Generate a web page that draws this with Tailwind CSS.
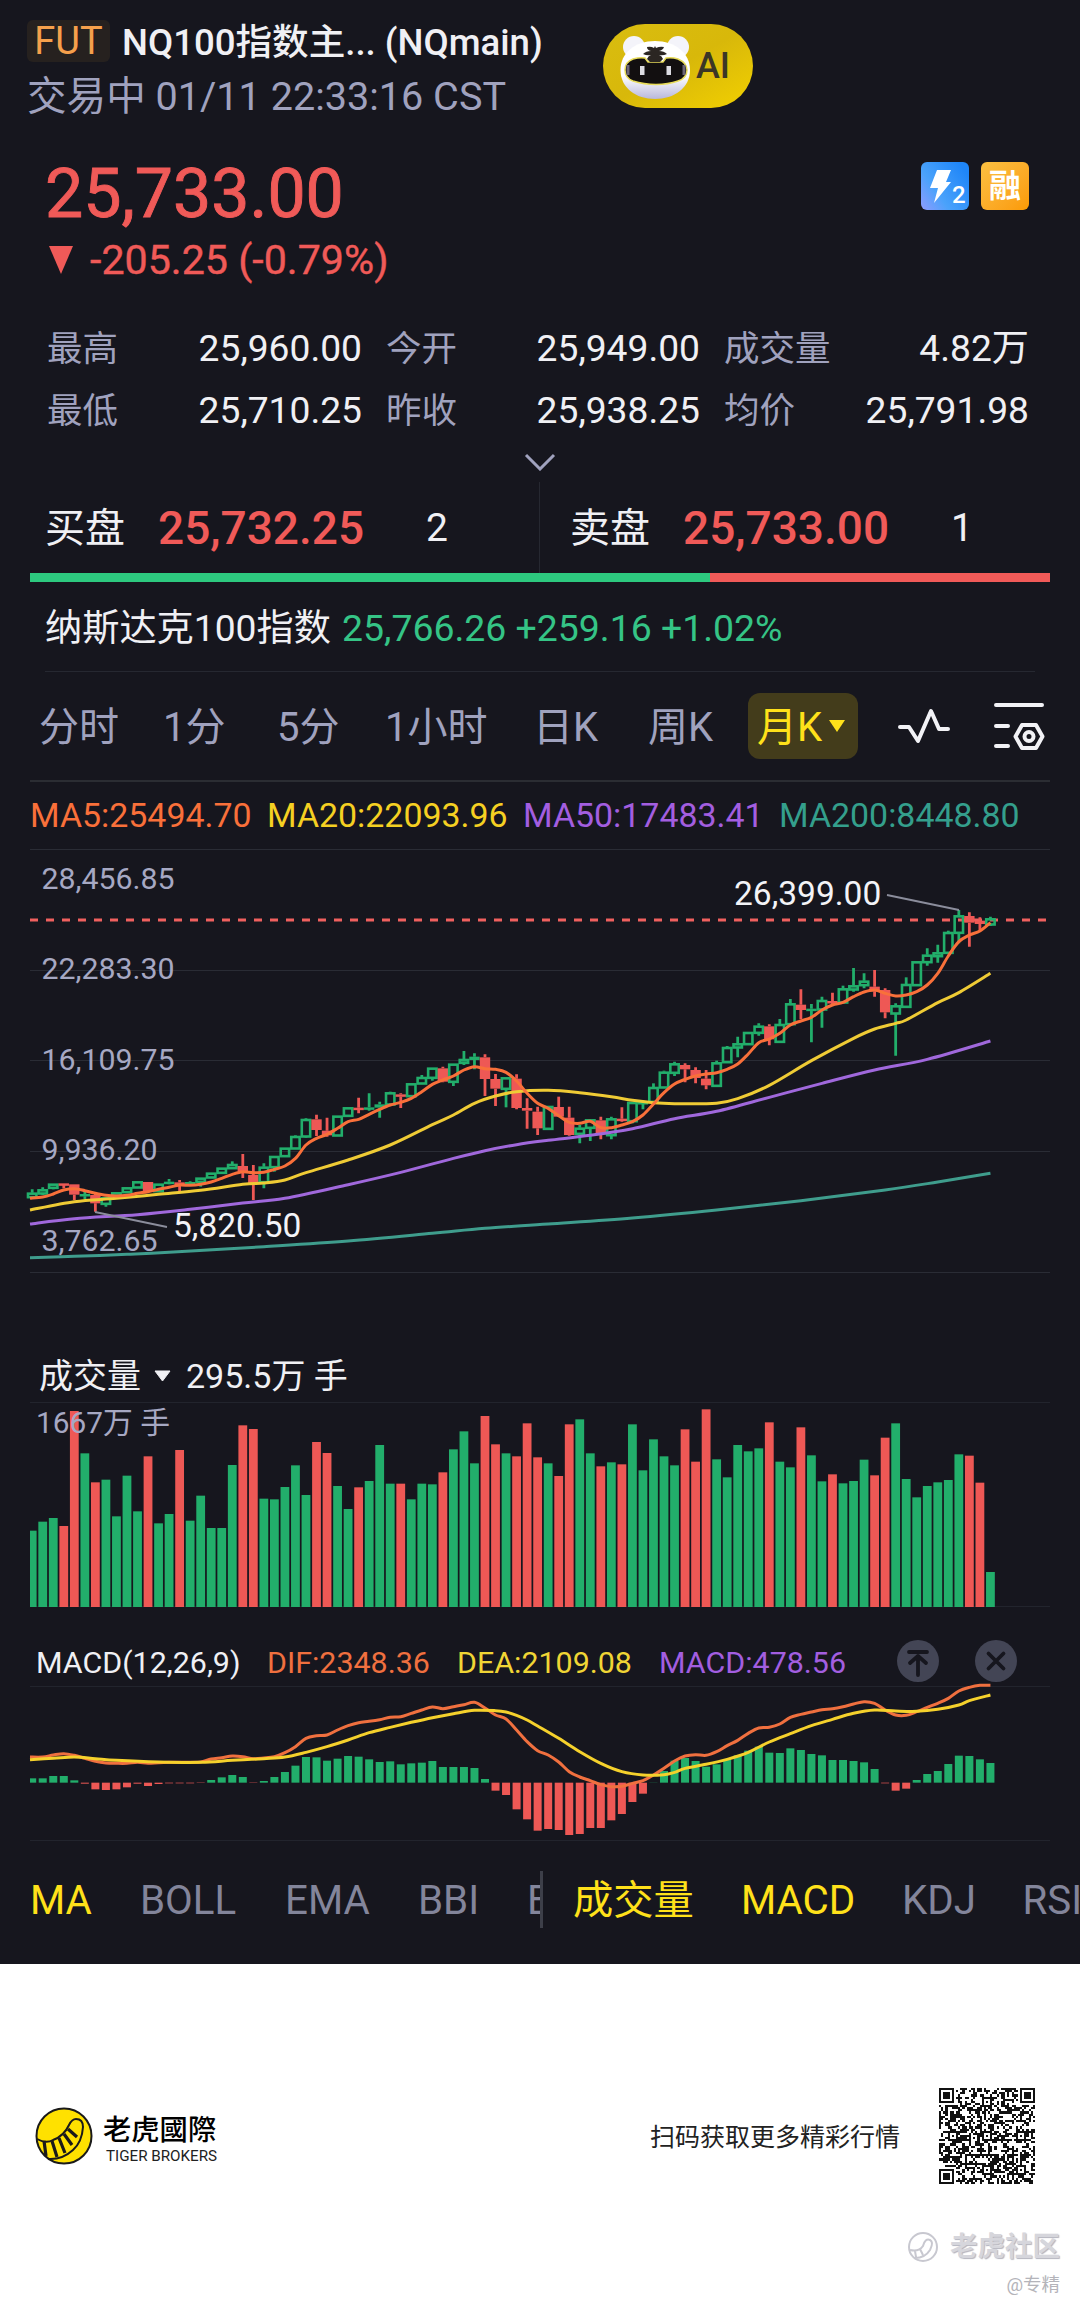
<!DOCTYPE html>
<html lang="zh-CN">
<head>
    <meta charset="UTF-8">
    <meta name="viewport" content="width=device-width, initial-scale=1.0">
    <title>NQ100指数主连 (NQmain)</title>
    <script src="https://cdn.jsdelivr.net/npm/@tailwindcss/browser@4"></script>
</head>
<body class="bg-white w-[1080px] overflow-x-hidden font-[Roboto,'Noto_Sans_CJK_SC',sans-serif]">
    <main class="bg-[#16161e] h-[1964px] text-[#f0f0f4] overflow-hidden whitespace-nowrap">
        <!-- 标题栏 -->
        <header class="flex h-[130px] pl-[27px] pt-5">
            <div class="w-[576px]">
                <div class="flex items-center h-[42px]">
                    <span class="bg-[#26211f] text-[#f5a04c] text-[38px] leading-[43px] w-[83px] h-[42px] rounded-md text-center">FUT</span>
                    <h1 class="ml-3 pt-[4px] text-[36.600px] leading-[42px] font-medium">NQ100指数主... (NQmain)</h1>
                </div>
                <p class="pt-px text-[39.600px] leading-[68px] text-[#a0a2be]">交易中 01/11 22:33:16 CST</p>
            </div>
            <div class="relative mt-1 w-[150px] h-[84px] rounded-full bg-linear-to-br from-[#d9bd10] via-[#d8b80a] to-[#f2d000] flex items-center">
                <svg class="absolute inset-0" width="150" height="84" viewBox="0 0 150 84">
                    <defs>
                        <linearGradient id="face" x1="0" y1="0" x2="0" y2="1">
                            <stop offset="0.6" stop-color="#fff"/>
                            <stop offset="1" stop-color="#b9b8dc"/>
                        </linearGradient>
                    </defs>
                    <circle cx="31" cy="23" r="11" fill="#f4f4fa"/>
                    <circle cx="75" cy="23" r="11" fill="#f4f4fa"/>
                    <path d="M52 17c20 0 35 12 35 29 0 18-16 29-35 29S17.500 64 17.500 46c0-17 14.500-29 34.500-29z" fill="url(#face)"/>
                    <path d="M30 35q7-2 12-1l3 4h15l3-4q6-1 12 1 9 4 9 11 0 8-9 11-10 3.500-22 3.500T30 57q-8-3-8-11t8-11z" fill="#120f10" stroke="#e8dc5a" stroke-width="1.500"/>
                    <path d="M44 23q4-1 7 1l1-2 1 2q4-2 8-1-1 3-5 4 5 0 8 3-4 2-8 1 3 1 4 4l-3 3H47l-3-3q1-3 4-4-4 1-8-1 3-3 8-3-4-1-4-4z" fill="#2b2622"/>
                    <rect x="37" y="42" width="4.500" height="9" fill="#dcdce2"/>
                    <rect x="63.500" y="42" width="4.500" height="9" fill="#dcdce2"/>
                    <path d="M25 41v10M81 41v10" stroke="#6b6577" stroke-width="3"/>
                </svg>
                <span class="ml-[93px] text-[36px] leading-none text-[#3b3626] font-medium">AI</span>
            </div>
        </header>

        <!-- 最新价 -->
        <section class="relative flex justify-between pt-6 pl-[45px] pr-[51px]">
            <div class="text-[#f05a58]">
                <p class="text-[68px] leading-[80px] [-webkit-text-stroke:0.9px_#f05a58]">25,733.00</p>
                <p class="flex items-center h-[52px] text-[41.200px] leading-[52px] [-webkit-text-stroke:0.4px_#f05a58]">
                    <svg class="ml-[4px] mr-[17px]" width="24" height="28" viewBox="0 0 24 28"><path d="M0 0h24L12 28z" fill="#f05a58"/></svg>-205.25 (-0.79%)
                </p>
            </div>
            <div class="flex gap-3 pt-2">
                <svg width="48" height="48" viewBox="0 0 48 48">
                    <defs><linearGradient id="lv2" x1="0" y1="1" x2="1" y2="0.300"><stop offset="0" stop-color="#8f9bff"/><stop offset="0.400" stop-color="#4aa2fb"/><stop offset="1" stop-color="#1f86f8"/></linearGradient></defs>
                    <rect width="48" height="48" rx="6" fill="url(#lv2)"/>
                    <path d="M16 8h14l-5 12h5L13 41l4-15H9z" fill="#fff"/>
                    <text x="31" y="41" font-size="24" font-weight="500" fill="#fff">2</text>
                </svg>
                <span class="w-12 h-12 rounded-md bg-linear-to-br from-[#fbc040] to-[#fb9a00] text-white text-[32px] leading-[48px] font-bold text-center">融</span>
            </div>
        </section>

        <!-- 行情数据 -->
        <section class="grid grid-cols-[315px_314px_305px] gap-x-[24px] pt-[31px] pl-[47px] text-[37.200px] leading-[62px]">
            <div class="flex justify-between"><span class="pt-px text-[#a0a2be] text-[35.500px]">最高</span><span>25,960.00</span></div>
            <div class="flex justify-between"><span class="pt-px text-[#a0a2be] text-[35.500px]">今开</span><span>25,949.00</span></div>
            <div class="flex justify-between"><span class="pt-px text-[#a0a2be] text-[35.500px]">成交量</span><span>4.82万</span></div>
            <div class="flex justify-between -mt-px"><span class="pt-px text-[#a0a2be] text-[35.500px]">最低</span><span>25,710.25</span></div>
            <div class="flex justify-between -mt-px"><span class="pt-px text-[#a0a2be] text-[35.500px]">昨收</span><span>25,938.25</span></div>
            <div class="flex justify-between -mt-px"><span class="pt-px text-[#a0a2be] text-[35.500px]">均价</span><span>25,791.98</span></div>
        </section>
        <div class="flex justify-center items-center h-[40px]">
            <svg width="32" height="18" viewBox="0 0 32 18"><path d="M2 2l14 14L30 2" fill="none" stroke="#a0a2be" stroke-width="3"/></svg>
        </div>

        <!-- 买卖盘 -->
        <section class="flex h-[91px] items-center leading-[91px] text-[39px]">
            <div class="flex w-[540px] pl-[45px] pt-px border-r border-[#262831]">
                <span class="w-[113px] text-[40px]">买盘</span>
                <span class="w-[268px] text-[46px] text-[#f05a58] font-medium">25,732.25</span>
                <span>2</span>
            </div>
            <div class="flex pl-[30px] pt-px">
                <span class="w-[113px] text-[40px]">卖盘</span>
                <span class="w-[268px] text-[46px] text-[#f05a58] font-medium">25,733.00</span>
                <span>1</span>
            </div>
        </section>
        <div class="flex mx-[30px] h-[9px]">
            <div class="w-[680px] bg-[#2dc97f]"></div>
            <div class="flex-1 bg-[#f05a58]"></div>
        </div>
        <section class="flex mx-[45px] h-[90px] pt-1 border-b border-[#262831] leading-[85px] text-[37.400px]">
            <span class="w-[297px] text-[37.200px]">纳斯达克100指数</span>
            <span class="text-[#35c486]">25,766.26 +259.16 +1.02%</span>
        </section>

        <!-- 周期 -->
        <nav class="flex mx-[30px] h-[110px] border-b-2 border-[#2b2d33] items-center pl-[9px] text-[40px] leading-[66px] text-[#a0a2be]">
            <span class="w-[124px] pt-1">分时</span>
            <span class="w-[114px] pt-1">1分</span>
            <span class="w-[108px] pt-1">5分</span>
            <span class="w-[148px] pt-1">1小时</span>
            <span class="w-[115px] pt-1">日K</span>
            <span class="w-[100px] pt-1">周K</span>
            <span class="flex items-center w-[110px] h-[66px] rounded-xl bg-[#433c1b] text-[#ffe11a] pl-[9px] mr-[40px]">
                <span class="pt-[3px]">月K</span>
                <svg class="ml-[7px]" width="16" height="12" viewBox="0 0 16 12"><path d="M0 0h16L8 12z" fill="#ffe11a"/></svg>
            </span>
            <svg class="mr-[42px]" width="53" height="38" viewBox="0 0 53 38"><path d="M2 20h9l9 14L33 4l8 18h9" fill="none" stroke="#f2f2f6" stroke-width="4" stroke-linecap="round" stroke-linejoin="round"/></svg>
            <svg width="52" height="48" viewBox="0 0 52 48" fill="none" stroke="#f2f2f6" stroke-width="4" stroke-linecap="round" stroke-linejoin="round">
                <path d="M3 3h46M3 24h12M3 44h12M29 23h14l6.500 11.500L43 46H29l-6.500-11.500z"/>
                <circle cx="36" cy="34.500" r="4.500"/>
            </svg>
        </nav>
        <div class="flex pl-[30px] text-[33.900px] leading-[67px]">
            <span class="w-[237px] text-[#f9703a]">MA5:25494.70</span>
            <span class="w-[256px] text-[#f5d022]">MA20:22093.96</span>
            <span class="w-[256px] text-[#a35ee0]">MA50:17483.41</span>
            <span class="text-[#349f8c]">MA200:8448.80</span>
        </div>

        <!-- K线 -->
        <svg id="kline" class="block" width="1080" height="501" viewBox="0 0 1080 501">
            <path d="M30 .5H1050M30 121.500H1050M30 211.500H1050M30 302.500H1050M30 423.500H1050" stroke="#2a2c35"/>
            <g font-size="30.300" class="fill-[#a6a8c3]">
                <text x="41.500" y="40">28,456.85</text>
                <text x="41.500" y="130">22,283.30</text>
                <text x="41.500" y="221">16,109.75</text>
                <text x="41.500" y="311">9,936.20</text>
                <text x="41.500" y="402">3,762.65</text>
            </g>
            <path d="M30 71H1050" stroke="#f0605f" stroke-width="3" stroke-dasharray="8 8"/>
            <g id="candles"></g>
            <g id="maLines" fill="none" stroke-width="3"></g>
            <path d="M887 46l72 15M95 363l72 15" stroke="#8b8d9c" stroke-width="1.800"/>
            <g font-size="33.500" class="fill-[#f3f3f7]">
                <text x="734" y="56">26,399.00</text>
                <text x="173" y="388">5,820.50</text>
            </g>
        </svg>

        <!-- 成交量 -->
        <div class="flex items-center h-[52px] pl-[39px] text-[34px] leading-[52px]">
            <span>成交量</span>
            <svg class="ml-[13px] mr-[15px]" width="17" height="12" viewBox="0 0 17 12"><path d="M1 1h15L8.500 11z" fill="#f0f0f4" stroke="#f0f0f4" stroke-linejoin="round"/></svg>
            <span>295.5万 手</span>
        </div>
        <svg class="block" width="1080" height="235" viewBox="0 0 1080 235">
            <path d="M30 .5H1050M30 204.500H1050" stroke="#22242d"/>
            <g id="volume"></g>
            <text x="36" y="31" font-size="29.800" class="fill-[#a6a8c3]">1667万 手</text>
        </svg>

        <!-- MACD -->
        <div class="flex items-center h-[49px] pl-[36px] text-[30.400px] leading-[49px]">
            <span class="w-[231px] pt-px">MACD(12,26,9)</span>
            <span class="w-[190px] pt-px text-[#f0703f]">DIF:2348.36</span>
            <span class="w-[202px] pt-px text-[#f0d535]">DEA:2109.08</span>
            <span class="w-[238px] pt-px text-[#a35ee0]">MACD:478.56</span>
            <svg class="mr-[36px] -mt-px" width="42" height="42" viewBox="0 0 42 42" fill="none"><circle cx="21" cy="21" r="21" fill="#434555"/><path d="M12 12h18M21 35V16M13 23l8-7 8 7" stroke="#16161e" stroke-width="3.800" stroke-linecap="round" stroke-linejoin="round"/></svg>
            <svg class="-mt-px" width="42" height="42" viewBox="0 0 42 42" fill="none"><circle cx="21" cy="21" r="21" fill="#434555"/><path d="M13.500 13.500l15 15M28.500 13.500l-15 15" stroke="#16161e" stroke-width="3.800" stroke-linecap="round"/></svg>
        </div>
        <svg class="block overflow-visible" width="1080" height="174" viewBox="0 0 1080 174">
            <path d="M30 .5H1050M30 154.500H1050" stroke="#22242d"/>
            <g id="macdBars"></g>
            <g id="macdLines" fill="none" stroke-width="3"></g>
        </svg>

        <!-- 指标切换 -->
        <nav class="flex items-center h-[78px] text-[40.300px] leading-[54px] text-[#83859b]">
            <div class="flex w-[543px] shrink-0 pl-[30px] border-r-3 border-[#3d3f49] overflow-hidden">
                <span class="w-[110px] shrink-0 pt-[3px]  text-[#ffe11a]">MA</span>
                <span class="w-[145px] shrink-0 pt-[3px]">BOLL</span>
                <span class="w-[133px] shrink-0 pt-[3px]">EMA</span>
                <span class="w-[109px] shrink-0 pt-[3px]">BBI</span>
                <span class="pt-[3px]">E</span>
            </div>
            <div class="flex pl-[30px]">
                <span class="w-[168px] shrink-0 pt-[3px] text-[#ffe11a]">成交量</span>
                <span class="w-[161px] shrink-0 pt-[3px] text-[#ffe11a]">MACD</span>
                <span class="w-[120.500px] shrink-0 pt-[3px]">KDJ</span>
                <span class="pt-[3px]">RSI</span>
            </div>
        </nav>
    </main>

    <!-- 页脚 -->
    <footer class="h-[345px] overflow-hidden whitespace-nowrap">
        <div class="flex items-center h-[96px] mt-[124px] pl-[35px] pr-[45px]">
            <svg class="mr-[10px]" width="58" height="58" viewBox="0 0 58 58">
                <circle cx="29" cy="29" r="27.500" fill="#ffe100" stroke="#1a1a1a" stroke-width="2"/>
                <path d="M2 32q9 5 16 1 11-4 16-15 3-6 7-6 7 0 7 8-1 15-10 23-11 10-25 9" fill="none" stroke="#1a1a1a" stroke-width="2"/>
                <path d="M9 34l2 15M17 34l5 16M24 31l6 15M29 27l8 11M33 22l9 8" stroke="#1a1a1a" stroke-width="3.200"/>
            </svg>
            <div class="pt-[7px]">
                <p class="text-[28.300px] leading-[32px] font-medium text-black">老虎國際</p>
                <p class="pl-[3px] text-[15.200px] leading-[18px] text-[#222]">TIGER BROKERS</p>
            </div>
            <span class="ml-auto mr-[39px] pt-[3px] text-[25px] leading-[40px] text-[#222]">扫码获取更多精彩行情</span>
            <svg id="qr" width="96" height="96" viewBox="0 0 45 45" shape-rendering="crispEdges"></svg>
        </div>
        <div class="flex justify-end items-center h-[34px] mt-[46px] pr-[20px] text-[27.500px] leading-[34px] font-bold text-[#d6d6dc]">
            <svg class="mr-[11px]" width="32" height="32" viewBox="0 0 32 32" fill="none" stroke="#c8c8d0" stroke-width="2"><circle cx="16" cy="16" r="14"/><path d="M3 19q9 2 13-4 2-8 7-6 4 2 0 10-5 8-15 8M8 20l1 6M13 18l3 6"/></svg>
            <span class="[text-shadow:1px_1px_1px_#b4b4be]">老虎社区</span>
        </div>
        <p class="pr-5 pt-[7px] text-right text-[18.500px] leading-[28px] text-[#b4b4ba]">@专精</p>
    </footer>

    <script>
        const GREEN = "#22ae6b", RED = "#ee5855";
        const STEP = 10.53, X0 = 32.2;
        const cx = i => X0 + i * STEP;
        const put = (id, html) => { document.getElementById(id).innerHTML = html; };

        // [方向, 实体上, 实体下, 最高, 最低]
        const candles = [
            [1,1028,1043,1018,1046],[1,1018,1032,1012,1035],[1,1001,1015,1001,1018],[0,1000,1005,1000,1015],[0,1003,1034,1003,1050],
            [1,1032,1039,1022,1047],[0,1035,1060,1032,1085],[1,1042,1063,1040,1070],[1,1027,1040,1027,1040],[1,1012,1028,1012,1028],
            [1,994,1014,994,1014],[0,996,1025,996,1025],[1,1001,1025,1001,1025],[1,995,1001,987,1003],[0,997,1005,990,1023],
            [1,996,1002,994,1004],[1,983,997,983,1010],[1,968,984,968,984],[1,953,970,953,970],[1,942,956,934,956],
            [0,948,965,912,984],[0,975,1000,945,1050],[1,950,998,940,1015],[1,918,953,918,965],[1,893,920,893,920],
            [1,858,897,856,897],[1,807,861,805,863],[0,808,840,794,858],[0,842,856,803,860],[1,797,858,797,858],
            [1,772,799,772,799],[0,773,777,743,790],[1,772,776,730,782],[1,763,773,755,803],[1,727,765,725,765],
            [0,733,740,730,774],[1,700,740,700,740],[1,681,702,675,702],[1,653,685,653,692],[0,655,695,650,697],
            [1,641,697,641,708],[1,627,640,603,645],[1,620,630,610,658],[0,622,687,613,738],[0,687,716,672,768],
            [1,682,718,682,772],[0,686,774,673,778],[0,774,782,745,836],[0,785,835,770,855],[1,768,838,768,838],
            [0,771,800,740,800],[0,803,855,770,857],[1,833,853,825,880],[1,808,835,808,873],[0,811,853,800,868],
            [1,805,857,800,868],[0,806,811,772,815],[1,756,815,756,820],[1,756,762,752,778],[1,711,757,700,757],
            [1,665,714,662,714],[1,640,670,635,678],[0,645,658,640,697],[0,660,684,652,700],[0,686,706,660,718],
            [1,637,709,632,709],[1,591,638,588,638],[1,580,594,560,622],[1,546,584,546,584],[1,527,550,520,557],
            [0,529,568,523,586],[1,522,577,507,577],[1,460,524,447,524],[0,464,480,418,508],[1,476,481,462,577],
            [1,450,480,440,533],[0,453,459,428,462],[1,415,459,407,459],[1,406,420,354,425],[1,392,407,370,415],
            [0,410,424,360,440],[0,420,487,415,505],[1,466,492,460,617],[1,402,472,382,472],[1,334,407,334,407],
            [1,314,338,295,347],[1,307,320,284,338],[1,246,310,242,310],[1,196,250,180,280],[0,198,218,187,290],
            [0,212,222,202,243],[1,205,225,200,228]
        ];
        put("candles", candles.map(([up, top, bot, hi, lo], i) => {
            const x = cx(i), y = v => v / 3 + 1, c = up ? GREEN : RED;
            const h = (bot - top) / 3;
            const wick = `<path d="M${x} ${y(hi)}V${y(top)}M${x} ${y(bot)}V${y(lo)}" stroke="${c}" stroke-width="2.800"/>`;
            if (up && h > 4) {
                return wick + `<rect x="${x - 4.2}" y="${y(top) + 1}" width="8.400" height="${h - 1.5}" fill="none" stroke="${c}" stroke-width="2.600"/>`;
            }
            return wick + `<rect x="${x - 5.2}" y="${y(top)}" width="10.400" height="${Math.max(h, 2.5)}" fill="${c}"/>`;
        }).join(""));

        // 平滑曲线
        function curve(pts, y, color) {
            const p = pts.map(([i, v]) => [i === 0 ? 30 : cx(i), y(v)]);
            let d = `M${p[0]}`;
            for (let i = 0; i < p.length - 1; i++) {
                const a = p[i - 1] || p[i], b = p[i], c = p[i + 1], e = p[i + 2] || c;
                d += `C${b[0] + (c[0] - a[0]) / 6} ${b[1] + (c[1] - a[1]) / 6} ${c[0] - (e[0] - b[0]) / 6} ${c[1] - (e[1] - b[1]) / 6} ${c[0]} ${c[1]}`;
            }
            return `<path d="${d}" stroke="${color}"/>`;
        }
        const ma5 = [1045,1041,1032,1020,1016,1022,1030,1036,1038,1036,1030,1025,1018,1012,1005,1006,1003,996,985,973,965,968,967,958,948,925,885,865,853,835,815,808,793,778,765,757,745,725,703,690,678,660,650,656,658,667,693,730,760,775,797,817,820,814,833,833,825,815,795,762,728,702,688,678,672,668,658,642,612,578,567,550,525,513,502,480,465,457,440,426,420,430,438,435,425,405,370,318,275,255,243,218].map((v, i) => [i, v]);
        const ma20 = [[0,1080],[4,1055],[8,1045],[12,1033],[16,1021],[20,1003],[22,999],[24,990],[26,968],[30,930],[34,885],[38,824],[40,795],[42,760],[44,738],[46,725],[49,721],[52,728],[55,740],[57,751],[59,758],[61,761],[63,761],[65,760],[67,746],[70,706],[74,632],[78,565],[80,537],[82,520],[83,510],[86,458],[88,428],[91,370]];
        const ma50 = [[0,1122],[4,1106],[10,1094],[15,1078],[20,1059],[24,1045],[30,1004],[35,967],[40,925],[43,902],[46,884],[49,871],[53,856],[57,836],[61,806],[65,784],[70,742],[75,700],[80,660],[85,628],[91,573]];
        const ma200 = [[0,1223],[4,1219],[9,1213],[13,1207],[22,1190],[30,1173],[38,1150],[43,1135],[49,1122],[57,1104],[65,1080],[73,1052],[81,1020],[86,996],[91,970]];
        const yk = v => v / 3 + 1;
        put("maLines", curve(ma200, yk, "#3f9d8d") + curve(ma50, yk, "#a068dc") + curve(ma20, yk, "#efcb35") + curve(ma5, yk, "#f9703a"));

        // 成交量柱, 负数为下跌
        const vol = [572,545,534,-558,-213,340,-427,419,529,407,514,-349,550,522,-330,542,467,564,564,375,-256,-267,476,478,441,376,465,-306,-339,438,507,-442,423,315,431,-431,478,431,433,-397,328,274,370,-228,-313,340,-349,-250,-352,370,-408,-253,238,340,-379,367,-373,253,391,298,349,376,-268,-365,-208,358,412,315,334,325,-247,365,382,-262,346,424,-403,430,423,359,-406,-293,250,417,472,438,427,420,343,-347,-428,696];
        put("volume", vol.map((v, i) => {
            const left = Math.max(30, cx(i) - 4.4);
            return `<rect x="${left}" y="${Math.abs(v) / 3 - 62}" width="${cx(i) + 4.4 - left}" height="${(801 - Math.abs(v)) / 3}" fill="${v > 0 ? GREEN : RED}"/>`;
        }).join(""));

        const hist = [445,445,438,438,451,461,478,480,478,472,461,468,462,460,460,460,459,450,442,435,441,459,453,441,426,407,381,382,392,386,378,380,388,396,394,403,400,398,393,411,411,411,414,447,482,495,538,568,602,597,600,615,612,594,594,571,552,516,491,457.5,423,392,384,393,410,403,388,376,362,350,368,369,355,360,372,376,390,390,393,397,417,460,482,476,450,432,423,402,377,378,388,399];
        put("macdBars", hist.map((v, i) => {
            const left = Math.max(30, cx(i) - 4);
            return `<rect x="${left}" y="${Math.min(v, 458) / 3 - 56}" width="${cx(i) + 4 - left}" height="${Math.abs(v - 458) / 3}" fill="${v < 458 ? GREEN : RED}"/>`;
        }).join(""));
        const dif = [381,381,375,371,376,385,394,399,400,400,397,400,398,397,397,397,396,387,383,378,380,386,384,380,368,350,325,317,315,300,287,278,274,269,262,260,250,240,231,236,230,224,217,234,255,267,300,335,362,375,396,425,441,452,464,470,469,460,452,435,415,393,378,374,376,365,347,331,310,294,292,282,262,253,246,239,236,230,222,215,220,240,255,256,245,232,220,205,183,172,166,166].map((v, i) => [i, v]);
        const dea = [[0,389],[2,385],[4,381],[6,386],[8,391],[12,396],[16,397],[19,391],[22,386],[24,381],[26,367],[28,350],[30,330],[32,308],[34,292],[36,277],[38,263],[40,251],[42,241],[44,242],[45,246],[46,256],[47,270],[48,288],[50,325],[52,365],[54,400],[56,425],[58,435],[60,434],[61,427],[62,415],[64,403],[66,388],[68,367],[70,336],[72,311],[74,287],[76,268],[78,250],[80,240],[82,243],[84,244],[86,238],[88,225],[89,212],[91,195]];
        const ym = v => v / 3 - 56;
        put("macdLines", curve(dif, ym, "#f0703f") + curve(dea, ym, "#f5d12c"));

        // 二维码
        let seed = 20260111, qr = "";
        const rand = () => (seed = (seed * 1103515245 + 12345) % 2147483648) / 2147483648;
        const ring = (x, y, n) => {
            const r = Math.max(Math.abs(x), Math.abs(y));
            return r > n ? null : n === 4 ? r !== 4 && r !== 2 : r !== 1;
        };
        const marks = [[3,3,4],[41,3,4],[3,41,4],[22,22,2],[38,22,2],[22,38,2],[38,38,2],[22,6,2],[6,22,2]];
        for (let y = 0; y < 45; y++) {
            for (let x = 0; x < 45; x++) {
                let on = rand() < 0.5;
                for (const [mx, my, n] of marks) {
                    const r = ring(x - mx, y - my, n);
                    if (r !== null) on = r;
                }
                if (on) qr += `M${x} ${y}h1v1h-1z`;
            }
        }
        put("qr", `<path d="${qr}" fill="#111"/>`);
    </script>
</body>
</html>
